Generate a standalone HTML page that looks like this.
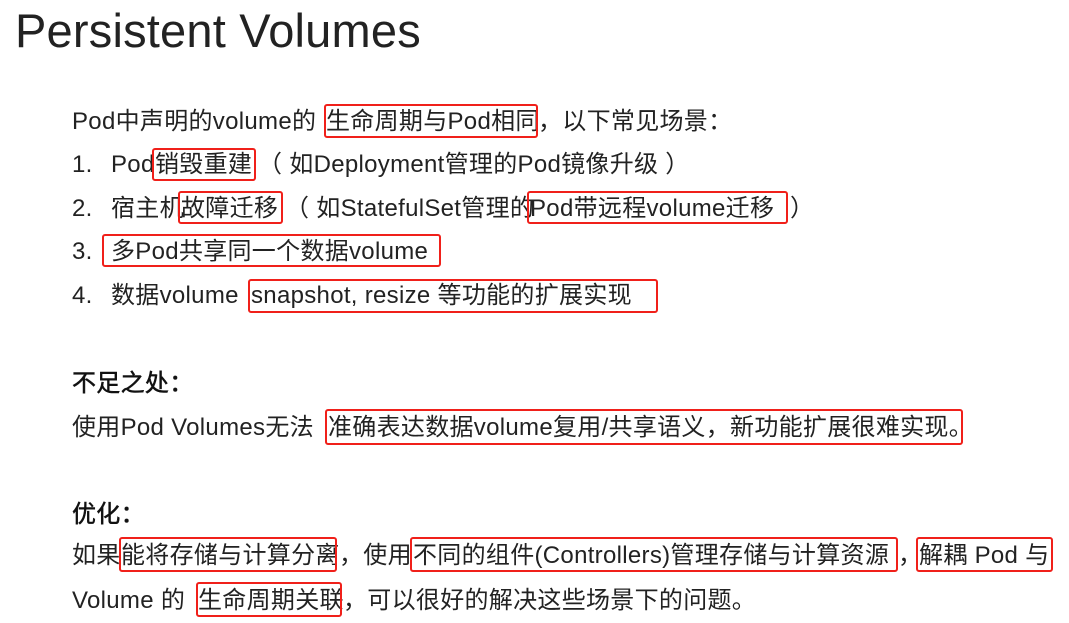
<!DOCTYPE html>
<html><head><meta charset="utf-8">
<style>
html,body{margin:0;padding:0;background:#fff;width:1069px;height:623px;overflow:hidden;position:relative}
.t{position:absolute;white-space:nowrap;font-family:"Liberation Sans","Noto Sans CJK SC",sans-serif;color:#222;font-size:24px;line-height:30px;letter-spacing:0.3px}
.h{-webkit-text-stroke:0.5px #111;color:#111}
.title{font-size:47px;line-height:50px;color:#222;left:15px;top:6px;letter-spacing:0.2px}
.b{position:absolute;border:2.5px solid #f0201a;border-radius:3px;box-sizing:border-box}
</style></head><body>
<div class="t title">Persistent Volumes</div>

<div class="t" style="left:72px;top:107px">Pod中声明的volume的</div>
<div class="t" style="left:326px;top:107px">生命周期与Pod相同</div>
<div class="t" style="left:538px;top:107px">，以下常见场景：</div>

<div class="t" style="left:72px;top:150px">1.</div>
<div class="t" style="left:111px;top:150px">Pod</div>
<div class="t" style="left:155px;top:150px">销毁重建</div>
<div class="t" style="left:258px;top:150px">（ 如Deployment管理的Pod镜像升级 ）</div>

<div class="t" style="left:72px;top:194px">2.</div>
<div class="t" style="left:111px;top:194px">宿主机</div>
<div class="t" style="left:181px;top:194px">故障迁移</div>
<div class="t" style="left:285px;top:194px">（ 如StatefulSet管理的</div>
<div class="t" style="left:530px;top:194px">Pod带远程volume迁移</div>
<div class="t" style="left:790px;top:194px">）</div>

<div class="t" style="left:72px;top:237px">3.</div>
<div class="t" style="left:111px;top:237px">多Pod共享同一个数据volume</div>

<div class="t" style="left:72px;top:281px">4.</div>
<div class="t" style="left:111px;top:281px">数据volume</div>
<div class="t" style="left:251px;top:281px">snapshot, resize 等功能的扩展实现</div>

<div class="t h" style="left:72px;top:369px">不足之处：</div>
<div class="t" style="left:72px;top:413px">使用Pod Volumes无法</div>
<div class="t" style="left:328px;top:413px">准确表达数据volume复用/共享语义，新功能扩展很难实现。</div>

<div class="t h" style="left:72px;top:500px">优化：</div>
<div class="t" style="left:72px;top:541px">如果</div>
<div class="t" style="left:121px;top:541px">能将存储与计算分离</div>
<div class="t" style="left:339px;top:541px">，使用</div>
<div class="t" style="left:413px;top:541px">不同的组件(Controllers)管理存储与计算资源</div>
<div class="t" style="left:898px;top:541px">，</div>
<div class="t" style="left:919px;top:541px">解耦 Pod 与</div>

<div class="t" style="left:72px;top:586px">Volume 的</div>
<div class="t" style="left:198px;top:586px">生命周期关联</div>
<div class="t" style="left:343px;top:586px">，可以很好的解决这些场景下的问题。</div>

<div class="b" style="left:324px;top:104px;width:214px;height:34px"></div>
<div class="b" style="left:152px;top:148px;width:104px;height:33px"></div>
<div class="b" style="left:178px;top:191px;width:105px;height:33px"></div>
<div class="b" style="left:527px;top:191px;width:261px;height:33px"></div>
<div class="b" style="left:102px;top:234px;width:339px;height:33px"></div>
<div class="b" style="left:248px;top:279px;width:410px;height:34px"></div>
<div class="b" style="left:325px;top:409px;width:638px;height:36px"></div>
<div class="b" style="left:119px;top:537px;width:218px;height:35px"></div>
<div class="b" style="left:410px;top:537px;width:488px;height:35px"></div>
<div class="b" style="left:916px;top:537px;width:137px;height:35px"></div>
<div class="b" style="left:196px;top:582px;width:146px;height:35px"></div>
</body></html>
